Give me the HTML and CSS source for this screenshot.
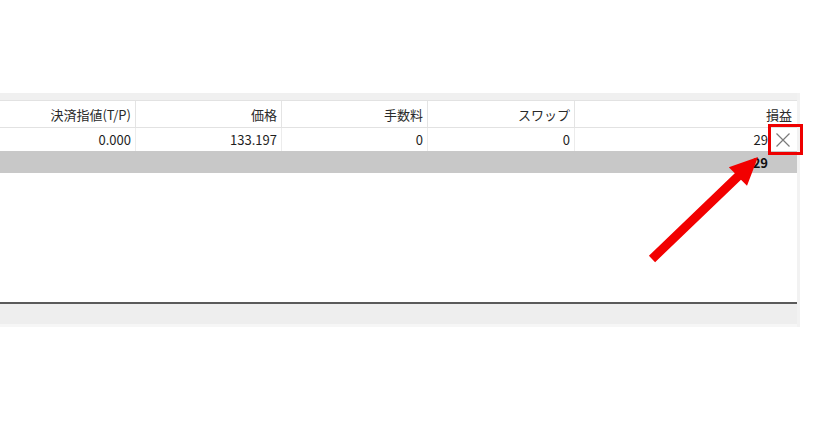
FILE: index.html
```html
<!DOCTYPE html>
<html lang="ja">
<head>
<meta charset="utf-8">
<link rel="stylesheet" href="styles.css">
</head>
<body>
<div class="page">
  <div class="panel">
    <div class="top-strip"></div>
    <div class="row header">
      <div class="cell c1">決済指値(T/P)</div>
      <div class="cell c2">価格</div>
      <div class="cell c3">手数料</div>
      <div class="cell c4">スワップ</div>
      <div class="cell c5">損益</div>
    </div>
    <div class="row data">
      <div class="cell c1">0.000</div>
      <div class="cell c2">133.197</div>
      <div class="cell c3">0</div>
      <div class="cell c4">0</div>
      <div class="cell c5 value-cell"><span class="value">29</span><span class="close-btn"><svg width="14" height="14" viewBox="0 0 14 14"><path d="M0.5 0.5 L13.5 13.5 M13.5 0.5 L0.5 13.5" stroke="#7a7a7a" stroke-width="1.2" fill="none"/></svg></span></div>
    </div>
    <div class="row total">
      <div class="total-value">29</div>
    </div>
    <div class="empty"></div>
    <div class="divider"></div>
    <div class="status"></div>
    <div class="bottom-strip"></div>
  </div>
  <div class="highlight-box"></div>
  <svg class="arrow" width="840" height="436" viewBox="0 0 840 436">
    <polygon points="648.9,255.8 734.8,173.3 728.8,167.2 758,157 747,185.8 741,179.7 655.1,262.2" fill="#f20000"/>
  </svg>
</div>
</body>
</html>
```

FILE: styles.css
```css
html, body {
  margin: 0;
  padding: 0;
  background: #ffffff;
}
.page {
  position: relative;
  width: 840px;
  height: 436px;
  overflow: hidden;
  font-family: "Noto Sans CJK JP", "Noto Sans", sans-serif;
  font-size: 13px;
  color: #1e1e1e;
}
.panel {
  position: relative;
  top: 93px;
  width: 797px;
  border-right: 3px solid #f2f2f2;
  display: flex;
  flex-direction: column;
}
.top-strip {
  height: 7px;
  background: #f0f0f0;
}
.row {
  display: flex;
}
.header {
  height: 26px;
  border-top: 1px solid #e2e2e2;
  border-bottom: 1px solid #e2e2e2;
  color: #2a2a2a;
}
.data {
  height: 23px;
}
.cell {
  box-sizing: border-box;
  display: flex;
  align-items: center;
  justify-content: flex-end;
  padding-right: 4px;
  border-right: 1px solid #e4e4e4;
  white-space: nowrap;
}
.c1 { width: 136px; }
.c2 { width: 146px; }
.c3 { width: 146px; }
.c4 { width: 147px; }
.c5 { flex: 1; border-right: none; padding-right: 5px; }
.data .cell { border-right-color: #ececec; }
.value-cell {
  padding-right: 0;
}
.close-btn {
  width: 28px;
  height: 23px;
  display: flex;
  align-items: center;
  justify-content: center;
  margin-left: 1px;
}
.close-btn svg { display: block; }
.total {
  height: 22px;
  background: #c8c8c8;
  justify-content: flex-end;
  align-items: center;
}
.total-value {
  font-weight: bold;
  color: #111;
  padding-right: 29px;
}
.empty {
  height: 129px;
}
.divider {
  height: 2px;
  background: #5a5a5a;
}
.status {
  height: 20px;
  background: #eeeeee;
}
.bottom-strip {
  height: 3px;
  background: #f6f6f6;
}
.highlight-box {
  position: absolute;
  left: 768px;
  top: 124px;
  width: 29px;
  height: 25px;
  border: 3px solid #ee0000;
}
.arrow {
  position: absolute;
  left: 0;
  top: 0;
}
```
